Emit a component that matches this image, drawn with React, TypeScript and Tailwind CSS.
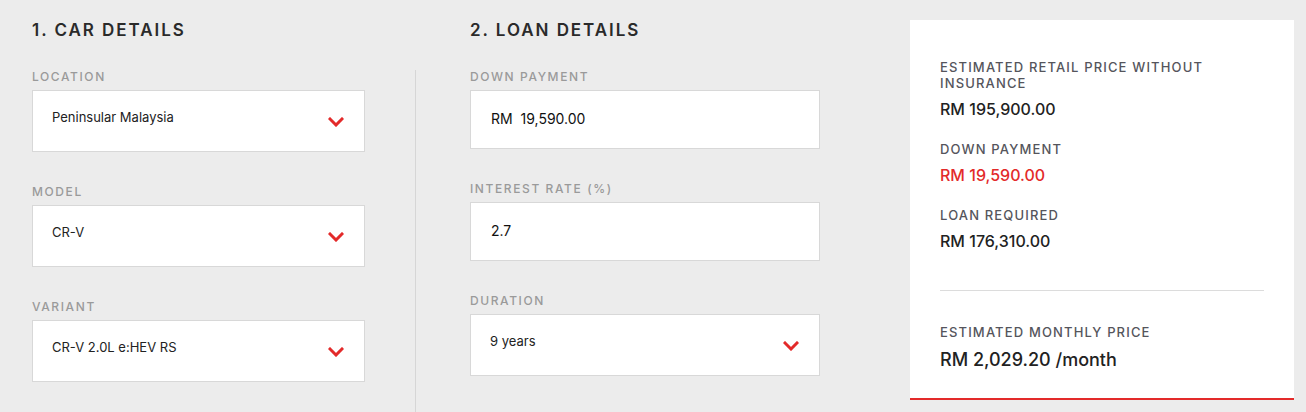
const font = { fontFamily: "Inter, 'Open Sans', sans-serif" };

function Chevron() {
  return (
    <svg width="16" height="10" viewBox="0 0 16 10" className="mt-[2px]">
      <polyline
        points="2,2 8,8 14,2"
        fill="none"
        stroke="#e32a2a"
        strokeWidth="3"
        strokeLinecap="square"
      />
    </svg>
  );
}

function Label({ children }: { children: React.ReactNode }) {
  return (
    <p className="mb-[6px] h-[14px] text-[12px] font-medium uppercase leading-[14px] tracking-[1.6px] text-[#9a9a9a]">
      {children}
    </p>
  );
}

function SelectBox({ value }: { value: string }) {
  return (
    <div className="flex h-[62px] items-center justify-between border border-[#d8d8d8] bg-white pl-[19px] pr-[20px]">
      <span className="-mt-[6px] text-[13px] text-[#222]">{value}</span>
      <Chevron />
    </div>
  );
}

function InputBox({ children }: { children: React.ReactNode }) {
  return (
    <div className="flex h-[59px] items-center border border-[#d8d8d8] bg-white pl-[20px]">
      <span className="-mt-[2px] text-[14px] text-[#111]">{children}</span>
    </div>
  );
}

function Stat({ label, value, red }: { label: string; value: string; red?: boolean }) {
  return (
    <div>
      <p className="text-[13px] font-medium uppercase leading-[16px] tracking-[1.15px] text-[#55555c]">
        {label}
      </p>
      <p
        className={`mt-[8px] text-[16px] font-medium leading-[20px] ${red ? "text-[#e32a2a]" : "text-[#222]"}`}
      >
        {value}
      </p>
    </div>
  );
}

export default function App() {
  return (
    <div style={font} className="flex h-[412px] w-[1306px] bg-[#ececec] pl-[32px] pt-[20px]">
      <div className="flex w-[333px] flex-col">
        <h2 className="h-[20px] text-[17px] font-semibold uppercase leading-[20px] tracking-[1.95px] text-[#2a2a2a]">
          1. Car Details
        </h2>
        <div className="mt-[30px]">
          <Label>Location</Label>
          <SelectBox value="Peninsular Malaysia" />
        </div>
        <div className="mt-[33px]">
          <Label>Model</Label>
          <SelectBox value="CR-V" />
        </div>
        <div className="mt-[33px]">
          <Label>Variant</Label>
          <SelectBox value="CR-V 2.0L e:HEV RS" />
        </div>
      </div>

      <div className="ml-[50px] mt-[50px] w-px self-stretch bg-[#d6d6d6]" />

      <div className="ml-[54px] flex w-[350px] flex-col">
        <h2 className="h-[20px] text-[17px] font-semibold uppercase leading-[20px] tracking-[1.95px] text-[#2a2a2a]">
          2. Loan Details
        </h2>
        <div className="mt-[30px]">
          <Label>Down Payment</Label>
          <InputBox>RM&nbsp;&nbsp;19,590.00</InputBox>
        </div>
        <div className="mt-[33px]">
          <Label>Interest Rate (%)</Label>
          <InputBox>2.7</InputBox>
        </div>
        <div className="mt-[33px]">
          <Label>Duration</Label>
          <SelectBox value="9 years" />
        </div>
      </div>

      <div className="ml-[90px] flex h-[380px] w-[384px] flex-col border-b-2 border-[#e32a2a] bg-white px-[30px] pt-[39px]">
        <div className="flex flex-col gap-[22px]">
          <Stat label="Estimated retail price without insurance" value="RM 195,900.00" />
          <Stat label="Down Payment" value="RM 19,590.00" red />
          <Stat label="Loan Required" value="RM 176,310.00" />
        </div>
        <div className="mt-[39px] h-px bg-[#dcdcdc]" />
        <div className="mt-[33px]">
          <p className="text-[13px] font-medium uppercase leading-[16px] tracking-[1.15px] text-[#55555c]">
            Estimated Monthly Price
          </p>
          <p className="mt-[9px] text-[18px] font-medium leading-[22px] text-[#222]">
            RM 2,029.20 /month
          </p>
        </div>
      </div>
    </div>
  );
}
